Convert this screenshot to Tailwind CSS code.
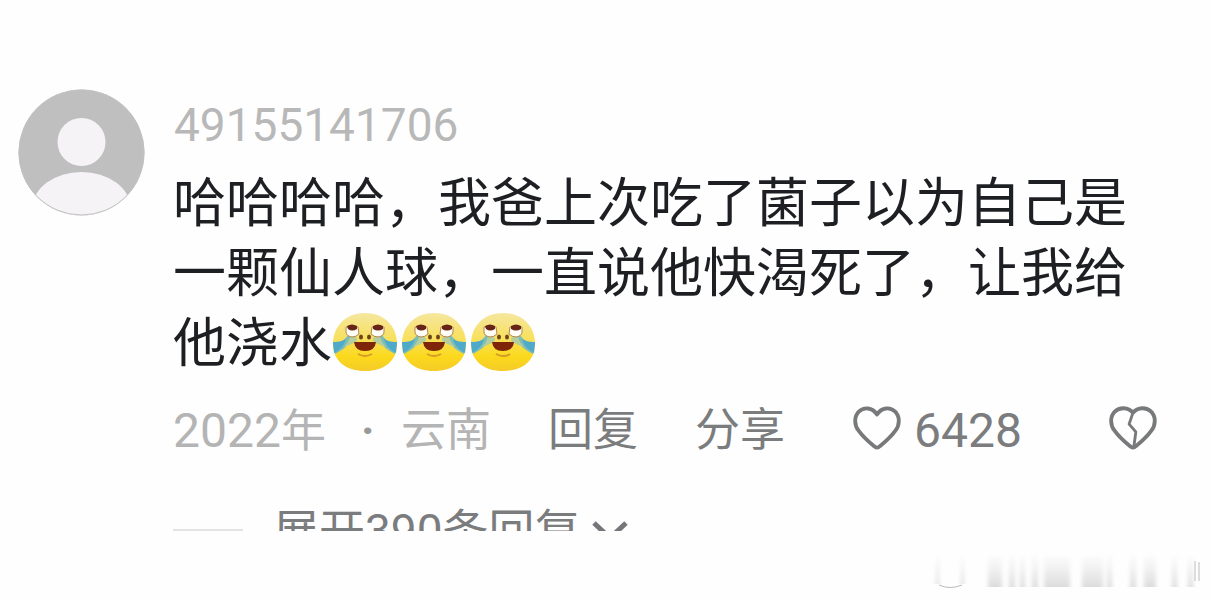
<!DOCTYPE html>
<html lang="zh-CN">
<head>
<meta charset="utf-8">
<meta name="viewport" content="width=device-width, initial-scale=1">
<title>评论</title>
<script src="https://cdn.jsdelivr.net/npm/@tailwindcss/browser@4"></script>
</head>
<body class="bg-[#fefefe] font-['Roboto','Noto_Sans_CJK_SC',sans-serif] text-[#7b7c7e]">
<svg class="absolute size-0" aria-hidden="true">
  <defs>
    <linearGradient id="face" x1="0" y1="0" x2="0" y2="1"><stop offset="0" stop-color="#f5e7a0"/><stop offset=".45" stop-color="#f8e05c"/><stop offset=".75" stop-color="#fbd91c"/><stop offset="1" stop-color="#f5cb28"/></linearGradient>
    <symbol id="joy" viewBox="0 0 66 60">
      <path d="M33 1C52 1 65 14 65 32C65 49 52 59 33 59C14 59 1 49 1 32C1 14 14 1 33 1Z" fill="url(#face)"/>
      <path d="M20 24C19 31 13 37 3 42L1 31C8 31 13 28 16 23ZM46 24C47 31 53 37 63 42L65 31C58 31 53 28 50 23Z" fill="#7dbdb8"/>
      <path d="M1 30C8 30 11 29 14 27C12 34 8 38 2 41ZM65 30C58 30 55 29 52 27C54 34 58 38 64 41Z" fill="#4fa9c9"/>
      <path d="M22 24Q27 26 24 30Q16 34 12 35Q17 30 18 24ZM44 24Q39 26 42 30Q50 34 54 35Q49 30 48 24Z" fill="#b5cf9c"/>
      <path d="M14 15H26L27 22Q24 25 20 25Q14 24 14 20ZM40 15H52V20Q52 24 46 25Q42 25 39 22Z" fill="#fffdf5" stroke="#b5864c"/>
      <path d="M15 14Q20 11 25 14V17Q20 20 16 17ZM41 14Q46 11 51 14V17Q46 20 41 17Z" fill="#672517"/>
      <ellipse cx="29" cy="25" rx="2" ry="2.5" fill="#6e451a"/><ellipse cx="37" cy="25" rx="2" ry="2.5" fill="#6e451a"/>
      <path d="M22 30H44Q43 39 33 39Q23 39 22 30Z" fill="#7f2508"/>
      <path d="M26 42Q33 46 40 42" fill="none" stroke="#d39a2a" stroke-width="2"/>
    </symbol>
  </defs>
</svg>
<main>
  <article class="flex h-[531px] items-start gap-7 overflow-hidden pt-[89px] pl-[18px]">
    <svg class="size-[127px] shrink-0" viewBox="0 0 127 127" role="img" aria-label="头像">
      <clipPath id="round"><circle cx="63.5" cy="63.5" r="63"/></clipPath>
      <circle cx="63.5" cy="63.5" r="63" fill="#bfbfbf"/>
      <g clip-path="url(#round)" fill="#f6f3f7"><circle cx="63.5" cy="53" r="24"/><ellipse cx="63.5" cy="119" rx="49" ry="36"/></g>
      <circle cx="63.5" cy="63.5" r="62.5" fill="none" stroke="#c2c2c2"/>
    </svg>
    <div class="min-w-0 grow pr-[54px]">
      <a href="#" class="block h-[80px] pt-2 pl-px text-[46px] leading-[56px] text-[#b8b8b8]">49155141706</a>
      <p class="text-[53px] leading-[70px] whitespace-nowrap text-[#1d1f23]">哈哈哈哈，我爸上次吃了菌子以为自己是<br>一颗仙人球，一直说他快渴死了，让我给<br><span class="flex items-center">他浇水<span class="flex gap-[3px] pb-1"><svg class="h-[60px] w-[66px]"><use href="#joy"/></svg><svg class="h-[60px] w-[66px]"><use href="#joy"/></svg><svg class="h-[60px] w-[66px]"><use href="#joy"/></svg></span></span></p>
      <div class="flex h-[72px] items-center pt-[32px] text-[45px] leading-[60px] whitespace-nowrap">
        <span class="w-[188px] text-[#b4b4b4]"><span class="text-[48px]">2022</span>年</span>
        <span class="w-[40px] font-bold text-[#999]">·</span>
        <span class="w-[147px] text-[#b4b4b4]">云南</span>
        <button type="button" class="w-[147px] text-left">回复</button>
        <button type="button" class="w-[157px] text-left">分享</button>
        <button type="button" class="flex items-center gap-3 text-[48px]">
          <svg class="mb-1.5 h-[46px] w-[50px]" viewBox="-1 -1 52 48" fill="none" stroke="#77797b" stroke-width="4" stroke-linejoin="round" aria-label="喜欢"><path d="M25 9C20 1 11 1 6 6C1 11 1 20 6 26Q11 33 22 42Q25 45 28 42Q39 33 44 26C49 20 49 11 44 6C39 1 30 1 25 9Z"/></svg>6428</button>
        <button type="button" class="ml-auto" aria-label="不喜欢"><svg class="mb-1.5 h-[46px] w-[50px]" viewBox="-2 -1 52 48" fill="none" stroke="#77797b" stroke-width="4" stroke-linejoin="round"><path d="M25 7C20 1 11 1 6 6C1 11 1 20 6 26Q11 33 22 42Q25 45 28 42Q39 33 44 26C49 20 49 11 44 6C39 1 30 1 25 7Z"/><path d="M25 7L21 19L28 27L26 42" stroke-width="3"/></svg></button>
      </div>
      <button type="button" class="mt-[50px] flex items-start text-[46px] leading-[60px] whitespace-nowrap">
        <span class="mt-[28px] mr-[30px] h-[2px] w-[70px] bg-[#e3e3e3]"></span>
        <span>展开<span>390</span>条回复</span>
        <svg class="mt-[19px] ml-[10px] h-[24px] w-[38px]" viewBox="0 0 38 24" fill="none" stroke="#74767a" stroke-width="5" aria-hidden="true"><path d="M3 3L19 18L35 3"/></svg>
      </button>
    </div>
  </article>
  <footer class="flex justify-end pt-[18px] pr-[10px]" aria-hidden="true">
    <svg class="h-[42px] w-[270px]" viewBox="0 0 270 42">
      <defs><linearGradient id="fade" x1="0" y1="0" x2="0" y2="1"><stop offset="0" stop-color="#e4e4e4" stop-opacity="0"/><stop offset="1" stop-color="#dcdcdc"/></linearGradient>
      <filter id="soft" x="-20%" width="140%"><feGaussianBlur stdDeviation="2 0"/></filter></defs>
      <g fill="url(#fade)" filter="url(#soft)"><rect x="5" y="4" width="3" height="31"/><rect x="30" y="4" width="3" height="31"/><rect x="57" y="4" width="14" height="34"/><rect x="78" y="4" width="6" height="34"/><rect x="89" y="4" width="5" height="34"/><rect x="101" y="4" width="6" height="34"/><rect x="113" y="4" width="26" height="34"/><rect x="151" y="4" width="21" height="34"/><rect x="176" y="4" width="5" height="34"/><rect x="199" y="4" width="6" height="34"/><rect x="213" y="4" width="12" height="34"/><rect x="241" y="4" width="5" height="34"/><rect x="257" y="4" width="5" height="34"/></g>
      <path d="M8 36Q19 41 31 36" fill="none" stroke="#bbb"/>
      <path d="M264 12V32M268 13V32" stroke="#ddd" stroke-width="2"/>
    </svg>
  </footer>
</main>
</body>
</html>
